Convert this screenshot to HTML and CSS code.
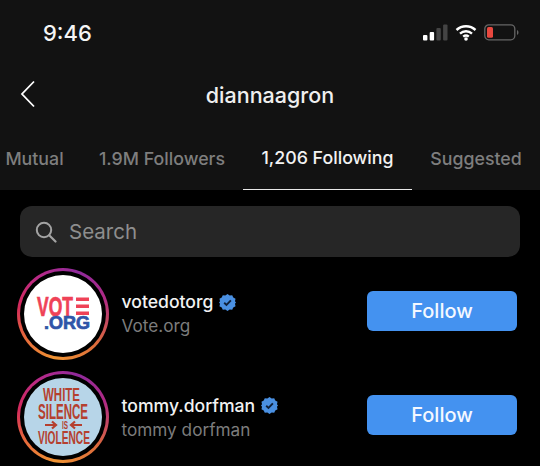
FILE: index.html
```html
<!DOCTYPE html>
<html lang="en">
<head>
<meta charset="utf-8">
<title>diannaagron</title>
<link rel="stylesheet" href="styles.css">
</head>
<body>
<div class="screen">
  <header class="top">
    <div class="status">
      <span class="time">9:46</span>
      <div class="status-icons">
        <svg width="25" height="17" viewBox="0 0 25 17"><rect x="0" y="11" width="4.400" height="5.500" rx="1" fill="#fff"/><rect x="6.700" y="8" width="4.400" height="8.500" rx="1" fill="#fff"/><rect x="13.400" y="4" width="4.400" height="12.500" rx="1" fill="#444"/><rect x="20.100" y="0.500" width="4.400" height="16" rx="1" fill="#444"/></svg>
        <svg width="22" height="17" viewBox="0 0 22 17"><path d="M1.500 6a14 14 0 0 1 19 0M5 9.600a9 9 0 0 1 12 0M8.200 12.600a4.400 4.400 0 0 1 5.600 0" fill="none" stroke="#fff" stroke-width="2.400"/><circle cx="11" cy="15" r="1.800" fill="#fff"/></svg>
        <svg width="35" height="17" viewBox="0 0 35 17"><rect x="0.800" y="0.800" width="30" height="15" rx="4" fill="none" stroke="#666" stroke-width="1.300"/><rect x="3" y="3" width="6" height="10.800" rx="1.500" fill="#e9483f"/><path d="M33 6v5a2.500 2.500 0 0 0 1.500-2.500A2.500 2.500 0 0 0 33 6z" fill="#666"/></svg>
      </div>
    </div>
    <div class="nav">
      <svg class="back" width="16" height="28" viewBox="0 0 16 28"><path d="M14 1.500 2 14l12 12.500" fill="none" stroke="#fff" stroke-width="1.800"/></svg>
      <h1 class="title">diannaagron</h1>
    </div>
    <nav class="tabs">
      <span class="tab tab-mutual">Mutual</span>
      <span class="tab tab-followers">1.9M Followers</span>
      <span class="tab tab-active">1,206 Following</span>
      <span class="tab tab-suggested">Suggested</span>
    </nav>
  </header>
  <main class="content">
    <div class="search">
      <svg width="22" height="22" viewBox="0 0 22 22"><circle cx="9" cy="9" r="7.200" fill="none" stroke="#a3a3a3" stroke-width="2"/><path d="m14.200 14.200 6.300 6.300" stroke="#a3a3a3" stroke-width="2.200" stroke-linecap="round"/></svg>
      <span class="search-text">Search</span>
    </div>
    <div class="row">
      <div class="ring">
        <svg class="avatar" width="78" height="78" viewBox="0 0 78 78">
          <circle cx="39" cy="39" r="39" fill="#fff"/>
          <text class="vote" x="13" y="41" textLength="36" lengthAdjust="spacingAndGlyphs">VOT</text>
          <path d="M52 22.500h13v3.600H52zM52 29.500h13v3.600H52zM52 36.500h13v3.600H52z" fill="#ef4257"/>
          <text class="org" x="20" y="54" textLength="46" lengthAdjust="spacingAndGlyphs">.ORG</text>
        </svg>
      </div>
      <div class="names">
        <div class="handle"><span>votedotorg</span>
          <svg class="badge" width="17" height="17" viewBox="0 0 18 18"><path d="M9 0l2.300 1.500 2.700-.3 1.100 2.500 2.400 1.300-.6 2.700L18 9l-1.100 1.300.6 2.700-2.400 1.300-1.100 2.500-2.700-.3L9 18l-2.300-1.500-2.700.3-1.100-2.500-2.400-1.300.6-2.700L0 9l1.100-1.300-.6-2.700 2.400-1.300L4 1.200l2.700.3z" fill="#4a90e2"/><path d="m5.500 9.300 2.400 2.300 4.700-4.900" fill="none" stroke="#10213a" stroke-width="2"/></svg>
        </div>
        <div class="sub">Vote.org</div>
      </div>
      <button class="follow">Follow</button>
    </div>
    <div class="row">
      <div class="ring">
        <svg class="avatar" width="78" height="78" viewBox="0 0 78 78">
          <circle cx="39" cy="39" r="39" fill="#b7d5e8"/>
          <text class="wsv wsv-white" x="37.500" y="23" textLength="37" lengthAdjust="spacingAndGlyphs">WHITE</text>
          <text class="wsv wsv-silence" x="39" y="41" textLength="50" lengthAdjust="spacingAndGlyphs">SILENCE</text>
          <text class="wsv wsv-is" x="41" y="51" textLength="6" lengthAdjust="spacingAndGlyphs">IS</text>
          <path d="M21 47h11m-4-3.500 4 3.500-4 3.500M58 47H47m4-3.500L47 47l4 3.500" fill="none" stroke="#b5402f" stroke-width="2.200"/>
          <text class="wsv wsv-violence" x="40" y="66" textLength="52" lengthAdjust="spacingAndGlyphs">VIOLENCE</text>
        </svg>
      </div>
      <div class="names">
        <div class="handle"><span>tommy.dorfman</span>
          <svg class="badge" width="17" height="17" viewBox="0 0 18 18"><path d="M9 0l2.300 1.500 2.700-.3 1.100 2.500 2.400 1.300-.6 2.700L18 9l-1.100 1.300.6 2.700-2.400 1.300-1.100 2.500-2.700-.3L9 18l-2.300-1.500-2.700.3-1.100-2.500-2.400-1.300.6-2.700L0 9l1.100-1.300-.6-2.700 2.400-1.300L4 1.200l2.700.3z" fill="#4a90e2"/><path d="m5.500 9.300 2.400 2.300 4.700-4.900" fill="none" stroke="#10213a" stroke-width="2"/></svg>
        </div>
        <div class="sub">tommy dorfman</div>
      </div>
      <button class="follow">Follow</button>
    </div>
  </main>
</div>
</body>
</html>
```
FILE: styles.css
```css
* { box-sizing: border-box; }
html, body { margin: 0; padding: 0; background: #000; }
body { font-family: Inter, "Noto Sans", sans-serif; color: #fff; }
.screen { width: 540px; height: 466px; overflow: hidden; background: #000; }
.top { height: 190px; background: #121212; display: flex; flex-direction: column; }
.status { height: 66px; display: flex; align-items: flex-start; justify-content: space-between; padding: 21px 21px 0 43px; }
.time { font-size: 22px; font-weight: 500; line-height: 25px; color: #f5f5f5; }
.status-icons { display: flex; align-items: center; gap: 7px; padding-top: 3px; }
.nav { height: 53px; display: flex; align-items: center; justify-content: center; position: relative; }
.back { position: absolute; left: 20px; top: 14px; }
.title { margin: 0; font-size: 21.500px; font-weight: 500; line-height: 28px; color: #efefef; position: relative; top: 2.500px; }
.tabs { flex: 1; display: flex; align-items: stretch; font-size: 17.800px; font-weight: 500; color: #7e7e7e; }
.tab { display: flex; align-items: center; justify-content: center; padding-top: 7px; white-space: nowrap; }
.tab-mutual { width: 69px; }
.tab-followers { width: 174px; padding-left: 12px; }
.tab-active { width: 169px; color: #f2f2f2; border-bottom: 1.500px solid #e8e8e8; }
.tab-suggested { width: 128px; }
.content { padding: 16px 20px 0; }
.search { height: 51px; border-radius: 12px; background: #262626; display: flex; align-items: center; gap: 12px; padding: 0 0 0 15px; }
.search-text { font-size: 20.500px; color: #8e8e8e; }
.row { display: flex; align-items: center; height: 103.500px; margin-left: -3px; }
.search + .row { margin-top: 5px; }
.ring { width: 92px; height: 92px; border-radius: 50%; flex: none; background: conic-gradient(from 190deg, #f09433 0deg, #e6683c 50deg, #d42a5c 90deg, #b52a8a 140deg, #8f2a9c 190deg, #b02a85 240deg, #dc6a3c 300deg, #f09433 360deg); display: flex; align-items: center; justify-content: center; position: relative; }
.ring::before { content: ""; position: absolute; inset: 3px; border-radius: 50%; background: #000; }
.avatar { position: relative; display: block; flex: none; overflow: visible; }
.vote { font-family: "Liberation Sans", sans-serif; font-weight: 700; font-size: 27px; fill: #ef4257; stroke: #ef4257; stroke-width: 0.700px; }
.org { font-family: "Liberation Sans", sans-serif; font-weight: 700; font-size: 18px; fill: #2f55a8; stroke: #2f55a8; stroke-width: 0.700px; }
.wsv { font-family: "Liberation Sans", sans-serif; font-weight: 700; fill: #b5402f; text-anchor: middle; }
.wsv-white { font-size: 18px; }
.wsv-silence { font-size: 22px; }
.wsv-is { font-size: 10px; }
.wsv-violence { font-size: 18px; }
.names { flex: 1; padding-left: 12.500px; }
.handle { display: flex; align-items: center; gap: 6px; font-size: 17.600px; font-weight: 500; line-height: 24px; color: #f2f2f2; }
.sub { font-size: 17.200px; line-height: 22px; color: #7c7c7c; margin-top: 1px; }
.badge { flex: none; }
.follow { flex: none; width: 150px; height: 40px; margin: 0 3px 5px 0; border: 0; border-radius: 6px; background: #4492f0; color: #f4f8ff; font-family: inherit; font-size: 20px; font-weight: 500; padding: 0; }
```
